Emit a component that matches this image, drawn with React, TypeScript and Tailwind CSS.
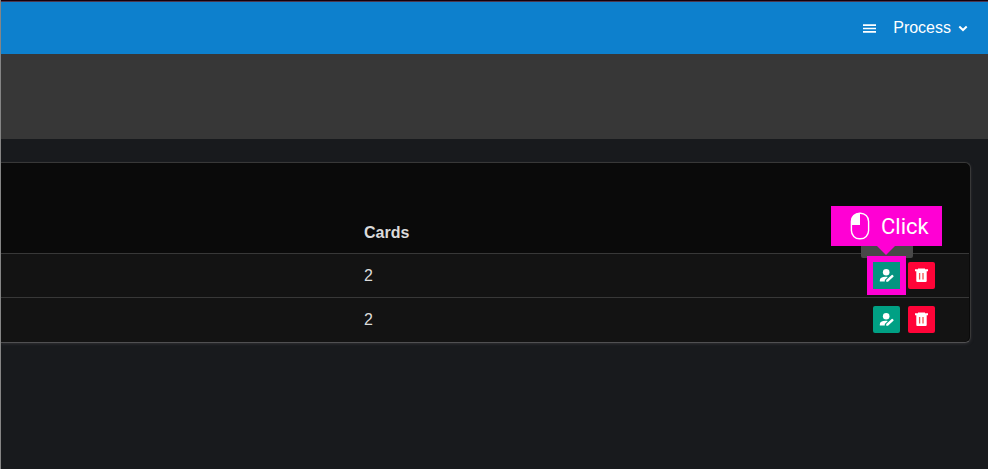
import React from 'react';

function UserPenIcon() {
  return (
    <svg className="h-[15px] w-[15px]" viewBox="0 0 15 15" fill="#fff" aria-hidden="true">
      <circle cx="7.2" cy="4.2" r="3.3" />
      <path d="M0.8 13.4V12.2C0.8 9.9 2.8 8.7 6.6 8.7C7.4 8.7 8.2 8.8 8.8 8.9L5.8 11.9V13.4Z" />
      <path d="M7.2 13.8V12.1L12.7 7Q13.2 6.6 13.7 7.1L14.4 7.8Q14.9 8.3 14.4 8.8L9 13.8Z" />
    </svg>
  );
}

function TrashIcon() {
  return (
    <svg className="h-[15px] w-[15px]" viewBox="0 0 15 15" fill="#fff" aria-hidden="true">
      <path d="M4 0.5H11V1.3H14V3.2H1V1.3H4Z" />
      <path d="M2.3 3H12.7V12.9Q12.7 14 11.6 14H3.4Q2.3 14 2.3 12.9Z" />
      <path d="M5.6 5V11.5M9 5V11.5" stroke="#f4514f" strokeWidth="1.3" />
    </svg>
  );
}

function MouseIcon() {
  return (
    <svg className="h-[28px] w-[20px] shrink-0" viewBox="0 0 20 28" fill="none" aria-hidden="true">
      <path d="M10 1.2C4.5 1.2 1.5 4.4 1.5 9V13H10Z" fill="#fff" />
      <rect x="1.4" y="1.2" width="17.2" height="25.6" rx="8.2" stroke="#fff" strokeWidth="1.4" />
    </svg>
  );
}

function Callout() {
  return (
    <>
      <span className="absolute -top-[16px] -left-3 h-3 w-[52px] rounded-b-[2px] bg-[#484848]" />
      <span className="absolute -top-[56px] -left-[42px] flex h-10 w-[111px] items-center bg-[#ff00d4] pl-[19px] text-white">
        <MouseIcon />
        <span className="mt-0.5 ml-[11px] font-[Roboto,sans-serif] text-[22px] leading-none font-normal">Click</span>
      </span>
      <svg className="absolute -top-[16px] left-1 h-[9px] w-[18px]" viewBox="0 0 18 9" aria-hidden="true">
        <path d="M0 0H18L9 9Z" fill="#ff00d4" />
      </svg>
      <span className="absolute -inset-1.5 border-6 border-[#ff00d4]" />
    </>
  );
}

function Row({ highlighted = false, last = false }: { highlighted?: boolean; last?: boolean }) {
  return (
    <div
      className={
        last
          ? 'mr-px flex h-[45px] items-center rounded-br-[5px] border-t border-[#383838] bg-[#131313] pb-px'
          : 'mr-px flex h-[44px] items-center border-t border-[#383838] bg-[#131313]'
      }
    >
      <span className="ml-[363px] flex-1 text-base leading-6">2</span>
      <div className="mr-[34px] flex gap-2">
        <button
          className={
            highlighted
              ? 'relative flex h-[27px] w-[27px] items-center justify-center bg-[#049480]'
              : 'flex h-[27px] w-[27px] items-center justify-center rounded-[2px] bg-[#00a084]'
          }
        >
          <UserPenIcon />
          {highlighted && <Callout />}
        </button>
        <button className="flex h-[27px] w-[27px] items-center justify-center rounded-[2px] bg-[#ff0438]">
          <TrashIcon />
        </button>
      </div>
    </div>
  );
}

export default function App() {
  return (
    <div className="h-[469px] w-[988px] overflow-hidden border-l border-[#858585] bg-[#181a1d] font-['Liberation_Sans',Arial,sans-serif] text-[#dbdbdb]">
      <div className="h-px bg-[#16000c]" />
      <header className="flex h-[53px] items-center justify-end border-t border-[#493751] bg-[#0d80cd] pr-5 text-white">
        <svg className="h-[9px] w-[13px]" viewBox="0 0 13 9" aria-hidden="true">
          <path d="M0 1.2H13M0 4.5H13M0 7.8H13" stroke="#fff" strokeWidth="1.7" />
        </svg>
        <span className="ml-[17px] text-base leading-6">Process</span>
        <svg className="ml-[7px] h-[7px] w-[10px]" viewBox="0 0 10 7" fill="none" aria-hidden="true">
          <path d="M1.3 1.5L5 5L8.7 1.5" stroke="#fff" strokeWidth="2" />
        </svg>
      </header>
      <div className="h-[85px] bg-[#373737]" />
      <main className="pt-[23px]">
        <section className="h-[181px] w-[970px] rounded-r-[6px] border-y border-r border-[#383838] border-b-[#505052] bg-[#0a0a0a] shadow-[0_1px_3px_#303034]">
          <div className="flex h-[90px] items-end pb-2">
            <h2 className="ml-[363px] text-base leading-6 font-bold">Cards</h2>
          </div>
          <Row highlighted />
          <Row last />
        </section>
      </main>
    </div>
  );
}
